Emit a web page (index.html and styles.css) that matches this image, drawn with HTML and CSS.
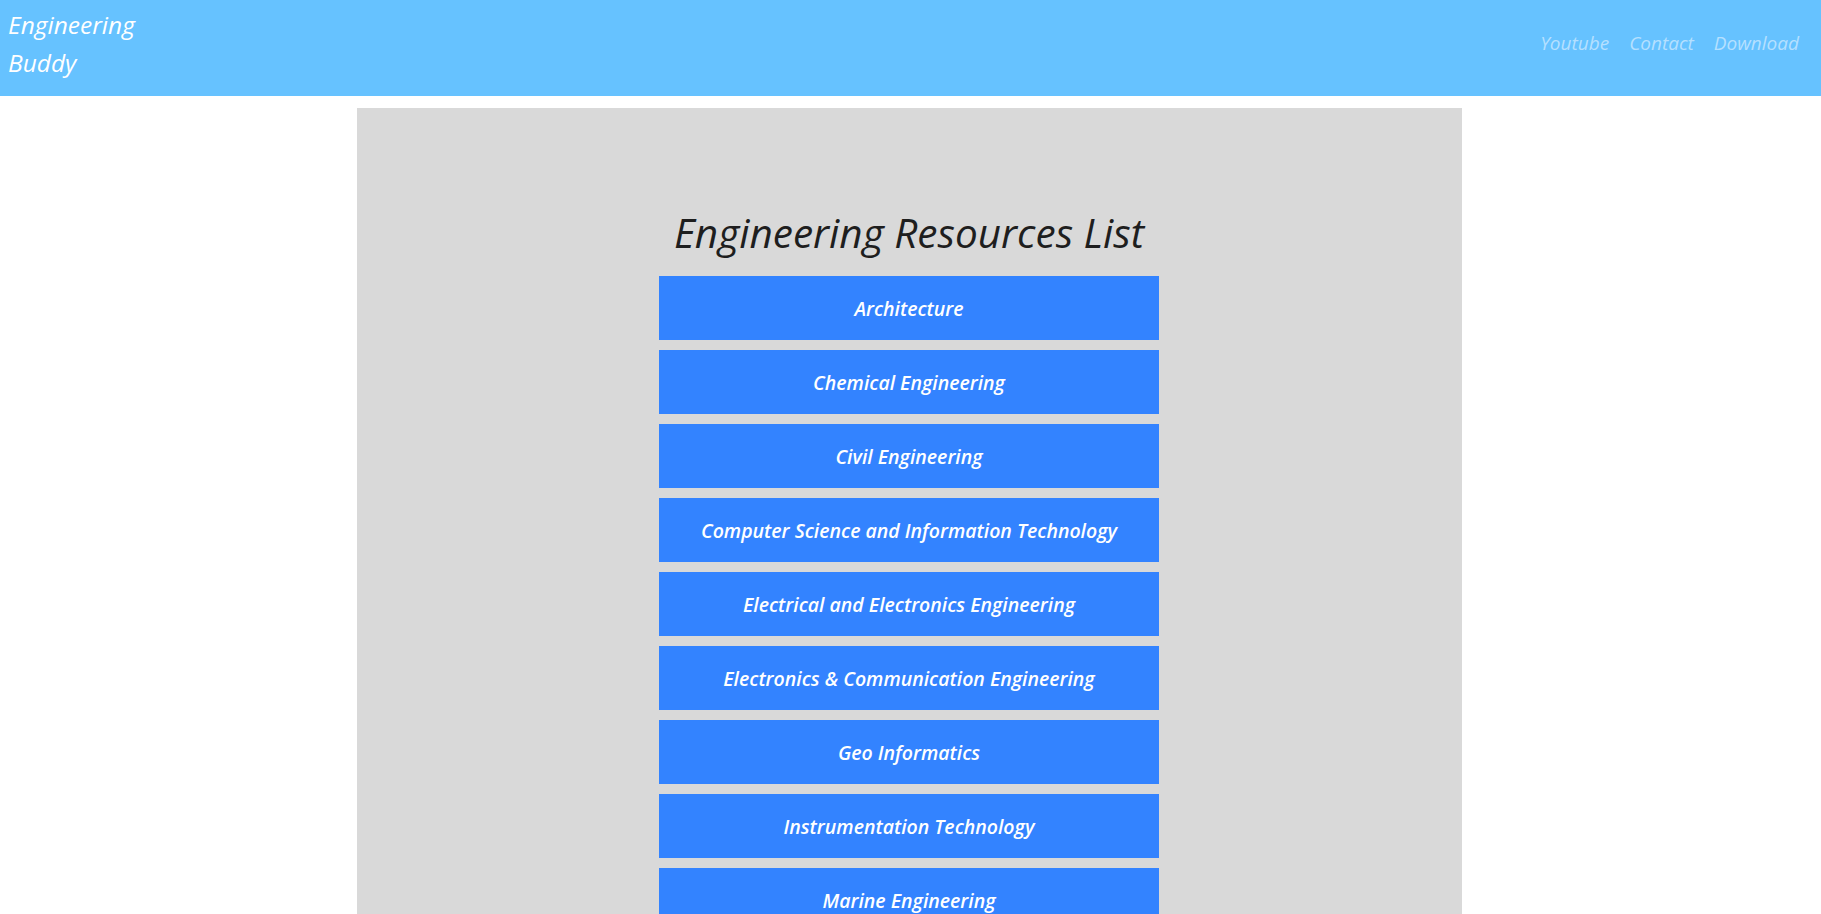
FILE: index.html
```html
<!DOCTYPE html>
<html lang="en">
<head>
<meta charset="utf-8">
<title>Engineering Buddy</title>
<link rel="stylesheet" href="styles.css">
</head>
<body>
<header class="topbar">
  <a class="brand" href="#">Engineering Buddy</a>
  <nav class="nav">
    <a class="nav-link" href="#">Youtube</a>
    <a class="nav-link" href="#">Contact</a>
    <a class="nav-link" href="#">Download</a>
  </nav>
</header>
<main class="panel">
  <h1 class="title">Engineering Resources List</h1>
  <ul class="list">
    <li><a class="item" href="#">Architecture</a></li>
    <li><a class="item" href="#">Chemical Engineering</a></li>
    <li><a class="item" href="#">Civil Engineering</a></li>
    <li><a class="item" href="#">Computer Science and Information Technology</a></li>
    <li><a class="item" href="#">Electrical and Electronics Engineering</a></li>
    <li><a class="item" href="#">Electronics &amp; Communication Engineering</a></li>
    <li><a class="item" href="#">Geo Informatics</a></li>
    <li><a class="item" href="#">Instrumentation Technology</a></li>
    <li><a class="item" href="#">Marine Engineering</a></li>
    <li><a class="item" href="#">Mechanical Engineering</a></li>
  </ul>
</main>
</body>
</html>
```

FILE: styles.css
```css
* { box-sizing: border-box; }

html, body {
  margin: 0;
  padding: 0;
  background: #ffffff;
  font-family: "Open Sans", "Noto Sans", sans-serif;
}

.topbar {
  height: 96px;
  background: #66c2ff;
  display: flex;
  justify-content: space-between;
  align-items: flex-start;
}

.brand {
  display: block;
  width: 145px;
  padding: 6px 0 0 8px;
  font-size: 24.5px;
  line-height: 38px;
  font-style: italic;
  color: #ffffff;
  text-decoration: none;
}

.nav {
  display: flex;
  gap: 20px;
  padding: 29px 22px 0 0;
}

.nav-link {
  font-size: 19px;
  font-style: italic;
  color: #b5e0ff;
  text-decoration: none;
  line-height: 28px;
}

.panel {
  width: 1105px;
  margin: 12px auto 0 calc(50% - 554px);
  padding-top: 98px;
  background: #d9d9d9;
  display: flex;
  flex-direction: column;
  align-items: center;
}

.title {
  margin: 0 0 16px;
  font-size: 40.5px;
  line-height: 54px;
  font-weight: 500;
  font-style: italic;
  color: #1e1e1e;
}

.list {
  list-style: none;
  margin: 0;
  padding: 0;
  display: flex;
  flex-direction: column;
  gap: 10px;
}

.item {
  width: 500px;
  height: 64px;
  padding-top: 1px;
  display: flex;
  align-items: center;
  justify-content: center;
  background: #3383ff;
  color: #ffffff;
  font-size: 19.5px;
  font-weight: 600;
  font-style: italic;
  text-decoration: none;
}
```
